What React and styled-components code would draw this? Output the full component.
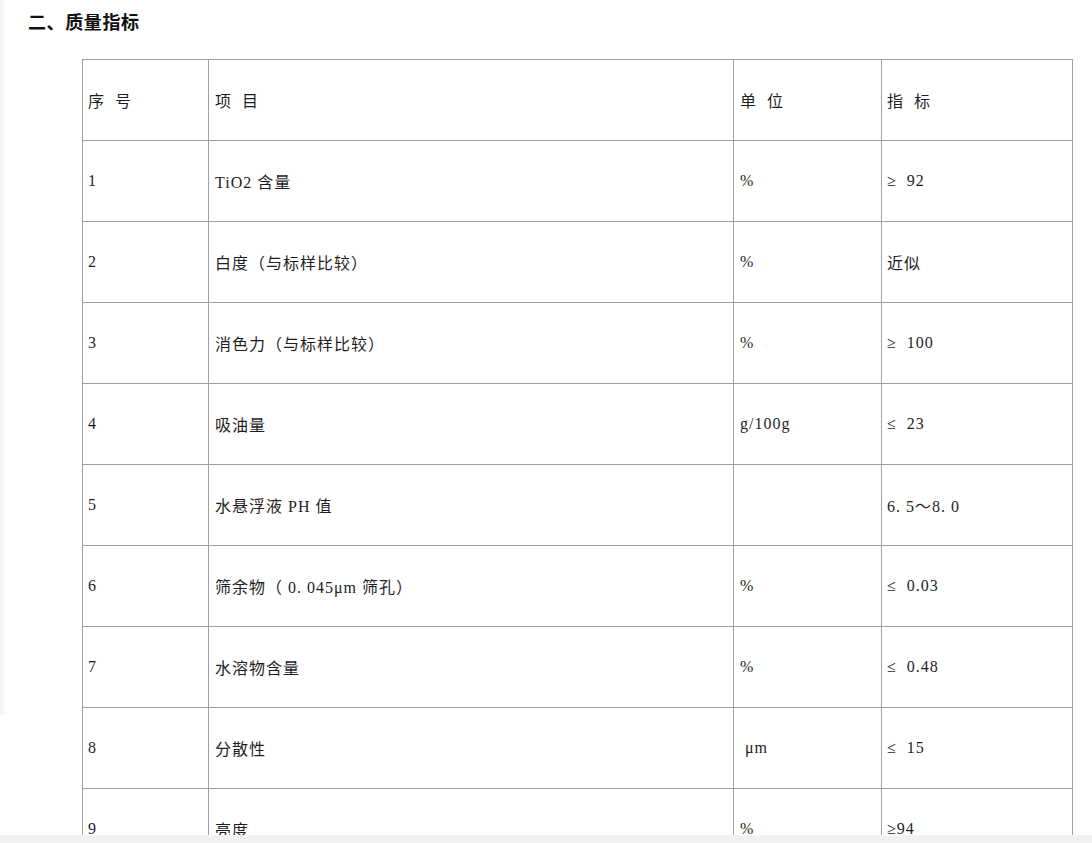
import React from "react";
import styled, { createGlobalStyle } from "styled-components";

const GlobalStyle = createGlobalStyle`
  html, body {
    margin: 0;
    padding: 0;
    background: #fff;
    color: #222;
    font-family: "Liberation Serif", "Noto Sans CJK SC", serif;
  }
`;

const rows = [
  { no: "1", item: "TiO2 含量", unit: "%", value: "≥  92" },
  { no: "2", item: "白度（与标样比较）", unit: "%", value: "近似" },
  { no: "3", item: "消色力（与标样比较）", unit: "%", value: "≥  100" },
  { no: "4", item: "吸油量", unit: "g/100g", value: "≤  23" },
  { no: "5", item: "水悬浮液 PH 值", unit: "", value: "6. 5～8. 0" },
  { no: "6", item: "筛余物（ 0. 045μm 筛孔）", unit: "%", value: "≤  0.03" },
  { no: "7", item: "水溶物含量", unit: "%", value: "≤  0.48" },
  { no: "8", item: "分散性", unit: " μm", value: "≤  15" },
  { no: "9", item: "亮度", unit: "%", value: "≥94" },
];

const widths = [126, 525, 148, 191];
const pads = [5, 6, 6, 5];

const Page = styled.div`
  padding: 12px 20px 40px 28px;
`;

const Heading = styled.h2`
  margin: 0;
  font-size: 18px;
  line-height: 22px;
  font-weight: 700;
  letter-spacing: 0.6px;
  color: #111;
  font-family: "Liberation Serif", "Noto Sans CJK SC", serif;
`;

const Table = styled.table`
  margin: 25px 0 0 54px;
  width: 990px;
  border-collapse: collapse;
  table-layout: fixed;
`;

const Col = styled.col`
  width: ${(p) => p.$w}px;
`;

const Cell = styled.td`
  height: 80px;
  padding: 0 0 0 ${(p) => p.$pad}px;
  border: 1px solid #a0a0a0;
  font-size: 16px;
  letter-spacing: 1px;
  color: #1e1e1e;
  vertical-align: middle;
  white-space: pre;
  overflow: hidden;
`;

const LeftShade = styled.div`
  position: fixed;
  left: 0;
  top: 0;
  width: 7px;
  height: 715px;
  background: linear-gradient(to right, rgba(0, 0, 0, 0.05), rgba(0, 0, 0, 0));
  pointer-events: none;
`;

const BottomBar = styled.div`
  position: fixed;
  left: 0;
  right: 0;
  bottom: 0;
  height: 7px;
  background: #f1f1f1;
  border-top: 1px solid #f6f6f6;
`;

const Row = ({ cells }) => (
  <tr>
    {cells.map((c, i) => (
      <Cell key={i} $pad={pads[i]}>
        {c}
      </Cell>
    ))}
  </tr>
);

const App = () => (
  <>
    <GlobalStyle />
    <LeftShade />
    <Page>
      <Heading>二、质量指标</Heading>
      <Table>
        <colgroup>
          {widths.map((w, i) => (
            <Col key={i} $w={w} />
          ))}
        </colgroup>
        <tbody>
          <Row cells={["序  号", "项  目", "单  位", "指  标"]} />
          {rows.map((r) => (
            <Row key={r.no} cells={[r.no, r.item, r.unit, r.value]} />
          ))}
        </tbody>
      </Table>
    </Page>
    <BottomBar />
  </>
);

export default App;
